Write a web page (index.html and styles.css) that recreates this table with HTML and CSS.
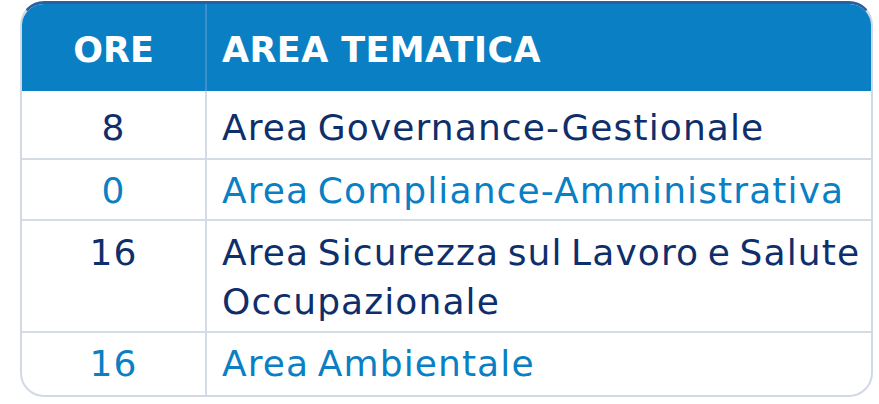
FILE: index.html
```html
<!DOCTYPE html>
<html lang="it">
<head>
<meta charset="utf-8">
<title>Ore per area tematica</title>
<link rel="stylesheet" href="styles.css">
</head>
<body>
<div class="card">
  <table class="grid">
    <thead>
      <tr class="head">
        <th class="c-ore">ORE</th>
        <th class="c-area">AREA TEMATICA</th>
      </tr>
    </thead>
    <tbody>
      <tr class="r1 dark">
        <td class="c-ore">8</td>
        <td class="c-area">Area Governance-Gestionale</td>
      </tr>
      <tr class="r2 light">
        <td class="c-ore">0</td>
        <td class="c-area">Area Compliance-Amministrativa</td>
      </tr>
      <tr class="r3 dark">
        <td class="c-ore">16</td>
        <td class="c-area">Area Sicurezza sul Lavoro e Salute Occupazionale</td>
      </tr>
      <tr class="r4 light">
        <td class="c-ore">16</td>
        <td class="c-area">Area Ambientale</td>
      </tr>
    </tbody>
  </table>
</div>
</body>
</html>
```

FILE: styles.css
```css
html, body {
  margin: 0;
  padding: 0;
  background: #ffffff;
}

body {
  padding: 1px 6px 0 20px;
  font-family: "DejaVu Sans", "Inter", sans-serif;
}

.card {
  width: 853px;
  box-sizing: border-box;
  border: 2px solid #d2d9e5;
  border-top: 3px solid #2b5f9f;
  border-radius: 24px;
  overflow: hidden;
  background: #ffffff;
}

.grid {
  width: 100%;
  border-collapse: collapse;
  border-spacing: 0;
  table-layout: fixed;
}

.c-ore {
  width: 184px;
  text-align: center;
  border-right: 2px solid #d5dbe5;
}

.c-area {
  text-align: left;
  padding-left: 15px;
  padding-right: 0;
}

.head th {
  background: #0a7fc4;
  color: #ffffff;
  font-weight: 700;
  font-size: 35px;
  line-height: 48px;
  height: 87px;
  padding: 4px 0 0 0;
  box-sizing: border-box;
  vertical-align: middle;
}

.head th.c-area {
  padding-left: 15px;
  letter-spacing: 0.4px;
}

.head th.c-ore {
  border-right-color: #3b8fcc;
}

tbody td {
  font-size: 36px;
  font-weight: 400;
  letter-spacing: 1.1px;
  word-spacing: -4px;
  line-height: 49px;
  vertical-align: top;
  box-sizing: border-box;
  border-bottom: 2px solid #d5dbe5;
  padding-top: 0;
  padding-bottom: 0;
}

tbody tr:last-child td {
  border-bottom: none;
}

.dark td { color: #0e2f6b; }
.light td { color: #0a7fc4; }

.r1 td { height: 68px; padding-top: 12px; }
.r2 td { height: 61px; padding-top: 6px; }
.r3 td { height: 112px; padding-top: 7px; }
.r4 td { height: 63px; padding-top: 6px; }
```
